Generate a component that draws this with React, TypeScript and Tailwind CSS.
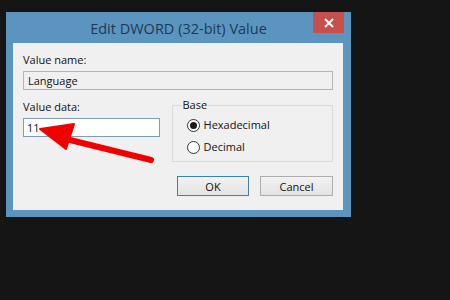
import React from 'react';

const font = { fontFamily: '"Open Sans", "Noto Sans", Arial, sans-serif' };

function Radio({ checked, label }: { checked?: boolean; label: string }) {
  return (
    <label className="flex items-center h-[22px]">
      <span className="w-[13px] h-[13px] rounded-full border border-[#333] bg-white flex items-center justify-center">
        {checked && <span className="w-[7px] h-[7px] rounded-full bg-[#1a1a1a]" />}
      </span>
      <span className="ml-[4px] text-[11px] text-[#111]">{label}</span>
    </label>
  );
}

export default function App() {
  return (
    <div className="relative w-[450px] h-[300px] bg-[#151515] pl-[6px] pt-[12px]" style={font}>
      {/* dialog window */}
      <div className="w-[345px] h-[205px] bg-[#5b95bf] flex flex-col">
        <div className="relative h-[31px] flex items-center justify-center">
          <span className="text-[14.5px] text-[#1d3954] pt-[2px]">Edit DWORD (32-bit) Value</span>
          <button className="absolute right-[7px] top-0 w-[31px] h-[21px] bg-[#c7504f] flex items-center justify-center">
            <svg width="10" height="10" viewBox="0 0 10 10">
              <path d="M1 1l8 8M9 1l-8 8" stroke="#fff" strokeWidth="1.8" />
            </svg>
          </button>
        </div>

        <div className="flex-1 ml-[7px] mr-[8px] mb-[7px] bg-[#f0f0f0] px-[10px] pt-[10px] pb-[14px] flex flex-col text-[11px] text-[#111]">
          <div className="leading-[14px]">Value name:</div>
          <div className="mt-[4px] h-[19px] border border-[#b5b5b5] bg-[#f0f0f0] flex items-center px-[4px] leading-none">
            Language
          </div>

          <div className="mt-[10px] flex">
            <div className="w-[137px] flex flex-col">
              <div className="leading-[14px]">Value data:</div>
              <div className="mt-[4px] h-[19px] border border-[#7d9dba] bg-white flex items-center px-[3px] leading-none">
                11
              </div>
            </div>
            <div className="relative ml-[12px] mt-[5px] w-[162px] h-[57px] border border-[#dadada] pl-[14px] pt-[8px]">
              <span className="absolute left-[9px] top-[-8px] bg-[#f0f0f0] px-[1px] leading-[14px]">Base</span>
              <Radio checked label="Hexadecimal" />
              <Radio label="Decimal" />
            </div>
          </div>

          <div className="mt-auto flex justify-end gap-[11px]">
            <button className="w-[72px] h-[20px] border border-[#3c7fb1] bg-gradient-to-b from-[#f2f2f2] to-[#e3e3e3] text-[11px] leading-none">
              OK
            </button>
            <button className="w-[73px] h-[20px] border border-[#adadad] bg-gradient-to-b from-[#f2f2f2] to-[#e3e3e3] text-[11px] leading-none">
              Cancel
            </button>
          </div>
        </div>
      </div>

      {/* red annotation arrow */}
      <svg className="absolute left-0 top-0" width="450" height="300" viewBox="0 0 450 300">
        <path d="M66 139 L151 160" stroke="#f20000" strokeWidth="6" strokeLinecap="round" />
        <path d="M40 129 L74 124 L66 149 Z" fill="#f20000" stroke="#f20000" strokeWidth="2" strokeLinejoin="round" />
      </svg>
    </div>
  );
}
